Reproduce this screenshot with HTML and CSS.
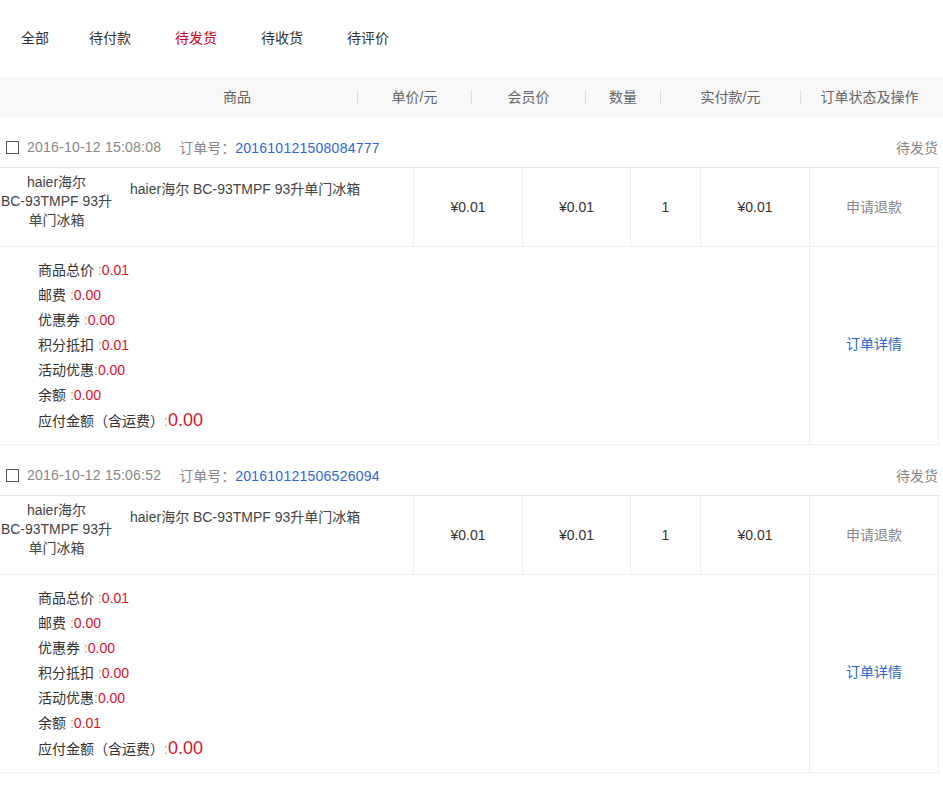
FILE: index.html
```html
<!DOCTYPE html>
<html lang="zh-CN">
<head>
<meta charset="utf-8">
<title>订单</title>
<link rel="stylesheet" href="styles.css">
</head>
<body>
<div class="page">
  <nav class="tabs">
    <a class="tab tab-first">全部</a>
    <a class="tab">待付款</a>
    <a class="tab active">待发货</a>
    <a class="tab">待收货</a>
    <a class="tab">待评价</a>
  </nav>

  <div class="thead">
    <div class="th th-goods">商品</div>
    <div class="th th-price"><span class="th-label">单价/元</span></div>
    <div class="th th-member"><span class="th-label">会员价</span></div>
    <div class="th th-qty"><span class="th-label">数量</span></div>
    <div class="th th-paid"><span class="th-label">实付款/元</span></div>
    <div class="th th-op"><span class="th-label">订单状态及操作</span></div>
  </div>

  <section class="order">
    <div class="order-head">
      <span class="check"></span>
      <span class="date">2016-10-12 15:08:08</span>
      <span class="order-no">订单号：<span class="no">201610121508084777</span></span>
      <span class="status">待发货</span>
    </div>
    <div class="item-row">
      <div class="cell cell-goods">
        <div class="thumb"><span class="nw">haier海尔</span> <span class="nw">BC-93TMPF&nbsp;93升</span> <span class="nw">单门冰箱</span></div>
        <div class="goods-name">haier海尔 BC-93TMPF 93升单门冰箱</div>
      </div>
      <div class="cell cell-mid">¥0.01</div>
      <div class="cell cell-mid">¥0.01</div>
      <div class="cell cell-mid">1</div>
      <div class="cell cell-mid">¥0.01</div>
      <div class="cell cell-mid cell-op">申请退款</div>
    </div>
    <div class="detail-row">
      <div class="summary">
        <div class="line">商品总价 <span class="colon">:</span><span class="val">0.01</span></div>
        <div class="line">邮费 <span class="colon">:</span><span class="val">0.00</span></div>
        <div class="line">优惠券 <span class="colon">:</span><span class="val">0.00</span></div>
        <div class="line">积分抵扣 <span class="colon">:</span><span class="val">0.01</span></div>
        <div class="line">活动优惠<span class="colon">:</span><span class="val">0.00</span></div>
        <div class="line">余额 <span class="colon">:</span><span class="val">0.00</span></div>
        <div class="line">应付金额（含运费）<span class="colon">:</span><span class="val val-big">0.00</span></div>
      </div>
      <div class="detail-link"><a class="link">订单详情</a></div>
    </div>
  </section>

  <section class="order">
    <div class="order-head">
      <span class="check"></span>
      <span class="date">2016-10-12 15:06:52</span>
      <span class="order-no">订单号：<span class="no">201610121506526094</span></span>
      <span class="status">待发货</span>
    </div>
    <div class="item-row">
      <div class="cell cell-goods">
        <div class="thumb"><span class="nw">haier海尔</span> <span class="nw">BC-93TMPF&nbsp;93升</span> <span class="nw">单门冰箱</span></div>
        <div class="goods-name">haier海尔 BC-93TMPF 93升单门冰箱</div>
      </div>
      <div class="cell cell-mid">¥0.01</div>
      <div class="cell cell-mid">¥0.01</div>
      <div class="cell cell-mid">1</div>
      <div class="cell cell-mid">¥0.01</div>
      <div class="cell cell-mid cell-op">申请退款</div>
    </div>
    <div class="detail-row">
      <div class="summary">
        <div class="line">商品总价 <span class="colon">:</span><span class="val">0.01</span></div>
        <div class="line">邮费 <span class="colon">:</span><span class="val">0.00</span></div>
        <div class="line">优惠券 <span class="colon">:</span><span class="val">0.00</span></div>
        <div class="line">积分抵扣 <span class="colon">:</span><span class="val">0.00</span></div>
        <div class="line">活动优惠<span class="colon">:</span><span class="val">0.00</span></div>
        <div class="line">余额 <span class="colon">:</span><span class="val">0.01</span></div>
        <div class="line">应付金额（含运费）<span class="colon">:</span><span class="val val-big">0.00</span></div>
      </div>
      <div class="detail-link"><a class="link">订单详情</a></div>
    </div>
  </section>
</div>
</body>
</html>
```

FILE: styles.css
```css
* { box-sizing: border-box; }

html, body {
  margin: 0;
  padding: 0;
  background: #fff;
}

body {
  font-family: "Liberation Sans", "Noto Sans CJK SC", sans-serif;
  font-size: 14px;
  color: #333;
}

.page {
  width: 943px;
}

/* tabs */
.tabs {
  display: flex;
  align-items: center;
  height: 77px;
  padding-left: 21px;
  padding-bottom: 2px;
  gap: 44px;
}

.tab {
  color: #333;
  line-height: 20px;
  cursor: pointer;
}

.tab-first {
  margin-right: -4px;
}

.tab.active {
  color: #d0021b;
}

/* table header */
.thead {
  display: flex;
  align-items: center;
  height: 40px;
  background: #f8f8f8;
  padding-left: 117px;
  color: #666;
  font-size: 14px;
}

.th {
  display: flex;
  align-items: center;
  line-height: 14px;
}

.th-label {
  flex: 1;
  text-align: center;
}

.th-goods { width: 240px; justify-content: center; }
.th-price { width: 114px; }
.th-member { width: 114px; }
.th-qty { width: 75px; }
.th-paid { width: 140px; }
.th-op { width: 138px; }

.th-price, .th-member, .th-qty, .th-paid, .th-op {
  border-left: 1px solid #dcdcdc;
}

/* order */
.order {
  width: 939px;
}

.order-head {
  display: flex;
  align-items: center;
  margin-top: 10px;
  height: 41px;
  border-bottom: 1px solid #e2e2e2;
  color: #888;
  font-size: 14px;
}

.check {
  width: 13px;
  height: 13px;
  border: 1px solid #555;
  margin-left: 6px;
  margin-right: 8px;
  flex: none;
}

.date {
  margin-right: 18px;
  letter-spacing: 0.22px;
}

.no {
  color: #2b68d4;
  letter-spacing: 0.25px;
}

.status {
  margin-left: auto;
  margin-right: 1px;
}

.item-row {
  display: grid;
  grid-template-columns: 414px 109px 108px 70px 109px 129px;
  height: 79px;
  border-bottom: 1px solid #eee;
}

.cell {
  border-right: 1px solid #eee;
}

.cell-mid {
  display: flex;
  align-items: center;
  justify-content: center;
  color: #333;
  line-height: 20px;
}

.cell-op {
  color: #888;
  padding-bottom: 1px;
}

.cell-goods {
  display: flex;
  align-items: flex-start;
}

.thumb {
  width: 113px;
  margin-top: 5px;
  text-align: center;
  line-height: 19px;
  color: #444;
  flex: none;
}

.nw {
  white-space: nowrap;
}

.goods-name {
  margin-top: 12px;
  margin-left: 17px;
  line-height: 19px;
  color: #444;
}

.detail-row {
  display: grid;
  grid-template-columns: 810px 129px;
  border-bottom: 1px solid #eee;
}

.summary {
  border-right: 1px solid #eee;
  padding: 11px 0 11px 38px;
}

.line {
  height: 25px;
  line-height: 25px;
  color: #333;
  white-space: nowrap;
}

.colon {
  color: #999;
}

.val {
  color: #e0102c;
}

.val-big {
  font-size: 18px;
}

.detail-link {
  display: flex;
  align-items: center;
  justify-content: center;
  border-right: 1px solid #eee;
  padding-bottom: 3px;
}

.link {
  display: block;
  line-height: 20px;
  color: #2b68d4;
  cursor: pointer;
}
```
